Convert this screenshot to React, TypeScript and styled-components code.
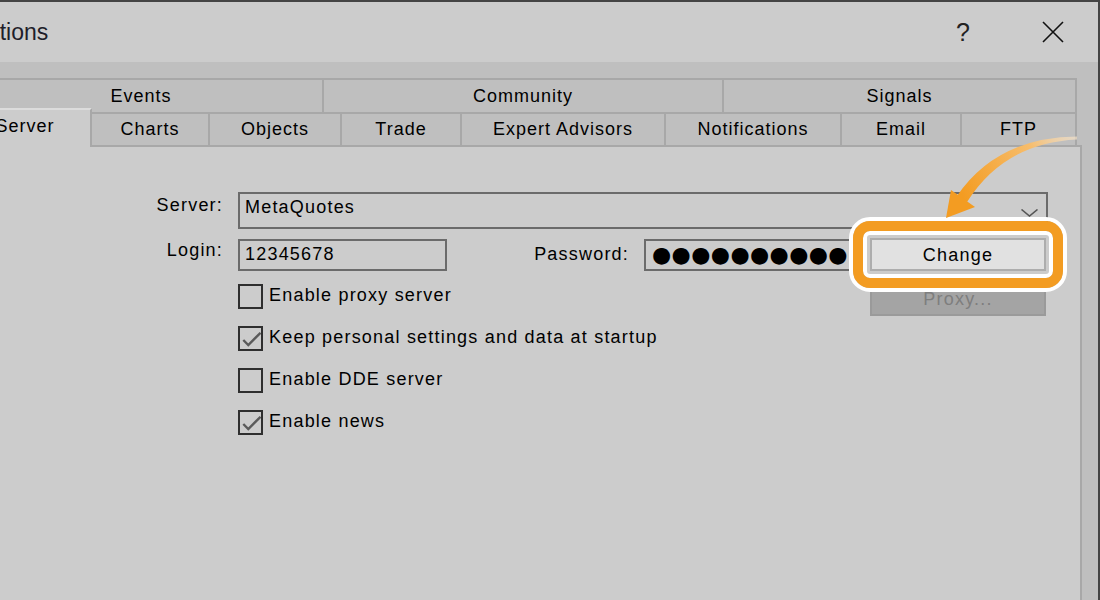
import styled, { createGlobalStyle } from "styled-components";

const FONT = `"Liberation Sans", Arial, sans-serif`;

const GlobalStyle = createGlobalStyle`
  html, body {
    margin: 0;
    padding: 0;
    background: #cccccc;
    overflow: hidden;
  }
  body {
    font-family: ${FONT};
    color: #000;
  }
`;

const Window = styled.div`
  position: relative;
  width: 1138px;
  height: 598px;
  margin-left: -40px;
  border-top: 2px solid #444;
  border-right: 2px solid #444;
  background: #bfbfbf;
  overflow: hidden;
`;

const TitleBar = styled.div`
  height: 60px;
  display: flex;
  align-items: center;
  background: #cccccc;
  padding-left: 9px;
`;

const Title = styled.div`
  flex: 1;
  font-size: 23px;
  color: #1e1e2a;
`;

const ControlButton = styled.div`
  width: 90px;
  height: 60px;
  display: flex;
  align-items: center;
  justify-content: center;
  font-size: 25px;
  color: #222;
`;

const Body = styled.div`
  padding: 16px 16px 0 0;
`;

const TabStrip = styled.div`
  margin-right: 5px;
`;

const TabRow = styled.div<{ $h: number }>`
  display: flex;
  align-items: flex-start;
  height: ${(p) => p.$h}px;
`;

const Tab = styled.div<{ $w: number; $active?: boolean }>`
  box-sizing: border-box;
  flex-shrink: 0;
  width: ${(p) => p.$w}px;
  height: ${(p) => (p.$active ? "39px" : "100%")};
  margin-top: ${(p) => (p.$active ? "-4px" : "0")};
  padding-bottom: ${(p) => (p.$active ? "5px" : "0")};
  position: relative;
  z-index: ${(p) => (p.$active ? 1 : 0)};
  display: flex;
  align-items: center;
  justify-content: center;
  border-top: 2px solid ${(p) => (p.$active ? "#dcdcdc" : "#a8a8a8")};
  border-right: 2px solid #a8a8a8;
  background: ${(p) => (p.$active ? "#cccccc" : "#bfbfbf")};
  font-size: 18px;
  letter-spacing: 1px;
`;

const Panel = styled.div`
  height: 460px;
  padding-top: 45px;
  background: #cccccc;
  border-top: 2px solid #a8a8a8;
  border-right: 2px solid #a8a8a8;
`;

const FieldRow = styled.div<{ $mt?: number }>`
  display: flex;
  align-items: flex-start;
  margin-top: ${(p) => p.$mt ?? 0}px;
  font-size: 18px;
  letter-spacing: 1.2px;
  line-height: 20px;
`;

const FieldLabel = styled.div<{ $pt: number }>`
  flex-shrink: 0;
  width: 263px;
  margin-right: 15px;
  padding-top: ${(p) => p.$pt}px;
  text-align: right;
`;

const Select = styled.div`
  box-sizing: border-box;
  width: 810px;
  height: 37px;
  display: flex;
  align-items: flex-start;
  justify-content: space-between;
  padding: 3px 8px 0 5px;
  border: 2px solid #6b6b6b;
`;

const Chevron = styled.svg`
  margin-top: 12px;
  flex-shrink: 0;
`;

const TextBox = styled.div<{ $w: number }>`
  box-sizing: border-box;
  flex-shrink: 0;
  width: ${(p) => p.$w}px;
  height: 32px;
  padding: 3px 5px 0 5px;
  border: 2px solid #6b6b6b;
  overflow: hidden;
  white-space: nowrap;
`;

const InlineLabel = styled.div`
  box-sizing: border-box;
  flex-shrink: 0;
  width: 197px;
  padding: 5px 15px 0 0;
  text-align: right;
`;

const Dots = styled.span`
  display: block;
  margin: -2px 0 0 1px;
  font-family: "DejaVu Sans", sans-serif;
  font-size: 22px;
  line-height: 26px;
  letter-spacing: 0.4px;
`;

const ButtonSlot = styled.div`
  position: relative;
  margin: -1px 0 0 12px;
`;

const PushButton = styled.div<{ $disabled?: boolean }>`
  box-sizing: border-box;
  width: 176px;
  height: 33px;
  display: flex;
  align-items: center;
  justify-content: center;
  border: 2px solid ${(p) => (p.$disabled ? "#9a9a9a" : "#adadad")};
  background: ${(p) => (p.$disabled ? "#a4a4a4" : "#e1e1e1")};
  color: ${(p) => (p.$disabled ? "#7e7e7e" : "#000")};
  font-size: 18px;
  letter-spacing: 1.2px;
`;

const Highlight = styled.div`
  position: absolute;
  inset: -21px;
  border: 4px solid #fff;
  border-radius: 21px;
  &::after {
    content: "";
    position: absolute;
    inset: 0;
    border: 10px solid #f39c22;
    border-radius: 17px;
    box-shadow: inset 0 0 0 4px #fff;
  }
`;

const OptionsRow = styled.div`
  display: flex;
  align-items: flex-start;
  margin-top: 12px;
  padding-left: 278px;
`;

const CheckList = styled.div`
  width: 632px;
  padding-top: 1px;
  display: flex;
  flex-direction: column;
  gap: 17px;
`;

const CheckRow = styled.div`
  display: flex;
  align-items: center;
  gap: 6px;
  height: 25px;
`;

const CheckBox = styled.span`
  box-sizing: border-box;
  width: 25px;
  height: 25px;
  flex-shrink: 0;
  border: 2px solid #2e2e2e;
  display: flex;
`;

const CheckText = styled.span`
  font-size: 18px;
  letter-spacing: 1.2px;
  line-height: 20px;
  padding-bottom: 4px;
`;

const Arrow = styled.svg`
  position: absolute;
  left: 980px;
  top: 128px;
  z-index: 2;
`;

const row1 = [
  { label: "Events", w: 364 },
  { label: "Community", w: 400 },
  { label: "Signals", w: 353 },
];

const row2 = [
  { label: "Server", w: 132, active: true },
  { label: "Charts", w: 118 },
  { label: "Objects", w: 132 },
  { label: "Trade", w: 120 },
  { label: "Expert Advisors", w: 204 },
  { label: "Notifications", w: 176 },
  { label: "Email", w: 120 },
  { label: "FTP", w: 115 },
];

const options = [
  { label: "Enable proxy server", checked: false },
  { label: "Keep personal settings and data at startup", checked: true },
  { label: "Enable DDE server", checked: false },
  { label: "Enable news", checked: true },
];

function Check({ checked }: { checked: boolean }) {
  return (
    <CheckBox>
      {checked && (
        <svg width="21" height="21" viewBox="0 0 21 21">
          <polyline
            points="3.3,12 8.3,17 20.5,4.8"
            fill="none"
            stroke="#5a5a5a"
            strokeWidth="2.4"
          />
        </svg>
      )}
    </CheckBox>
  );
}

function App() {
  return (
    <>
      <GlobalStyle />
      <Window>
        <TitleBar>
          <Title>Options</Title>
          <ControlButton>?</ControlButton>
          <ControlButton>
            <svg width="22" height="22" viewBox="0 0 22 22">
              <path d="M1 1 L21 21 M21 1 L1 21" stroke="#111" strokeWidth="1.6" />
            </svg>
          </ControlButton>
        </TitleBar>
        <Body>
          <TabStrip>
            <TabRow $h={34}>
              {row1.map((t) => (
                <Tab key={t.label} $w={t.w}>
                  {t.label}
                </Tab>
              ))}
            </TabRow>
            <TabRow $h={33}>
              {row2.map((t) => (
                <Tab key={t.label} $w={t.w} $active={t.active}>
                  {t.label}
                </Tab>
              ))}
            </TabRow>
          </TabStrip>
          <Panel>
            <FieldRow>
              <FieldLabel $pt={3}>Server:</FieldLabel>
              <Select>
                <span>MetaQuotes</span>
                <Chevron width="17" height="8" viewBox="0 0 17 8">
                  <polyline points="0.5,0.5 8.5,7 16.5,0.5" fill="none" stroke="#555" strokeWidth="1.6" />
                </Chevron>
              </Select>
            </FieldRow>
            <FieldRow $mt={10}>
              <FieldLabel $pt={1}>Login:</FieldLabel>
              <TextBox $w={209}>12345678</TextBox>
              <InlineLabel>Password:</InlineLabel>
              <TextBox $w={214}>
                <Dots>●●●●●●●●●●</Dots>
              </TextBox>
              <ButtonSlot>
                <PushButton>Change</PushButton>
                <Highlight />
              </ButtonSlot>
            </FieldRow>
            <OptionsRow>
              <CheckList>
                {options.map((o) => (
                  <CheckRow key={o.label}>
                    <Check checked={o.checked} />
                    <CheckText>{o.label}</CheckText>
                  </CheckRow>
                ))}
              </CheckList>
              <PushButton $disabled>Proxy...</PushButton>
            </OptionsRow>
          </Panel>
        </Body>
        <Arrow width="140" height="95" viewBox="940 130 140 95">
          <defs>
            <linearGradient id="arrowFade" gradientUnits="userSpaceOnUse" x1="1077" y1="138" x2="965" y2="200">
              <stop offset="0" stopColor="#fbe7cc" stopOpacity="0.6" />
              <stop offset="0.35" stopColor="#f7bd6c" />
              <stop offset="1" stopColor="#f39c22" />
            </linearGradient>
          </defs>
          <path
            d="M1077 136.6 Q 997 137.5 957 196 L 967 202 Q 1004 143 1077 139.4 Z"
            fill="url(#arrowFade)"
          />
          <path d="M951 190 L975 207 L946 218 Z" fill="#f39c22" />
        </Arrow>
      </Window>
    </>
  );
}

export default App;
